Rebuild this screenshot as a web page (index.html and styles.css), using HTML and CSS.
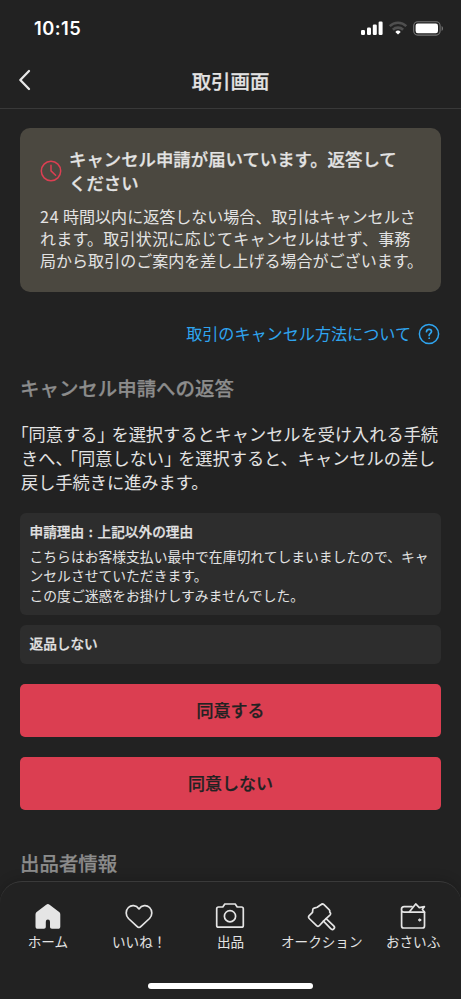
FILE: index.html
```html
<!DOCTYPE html>
<html lang="ja">
<head>
<meta charset="utf-8">
<meta name="viewport" content="width=device-width, initial-scale=1">
<title>取引画面</title>
<link rel="stylesheet" href="styles.css">
</head>
<body>
<div class="screen">
  <div class="status">
    <span class="clock">10:15</span>
    <div class="status-icons">
      <svg width="22" height="14" viewBox="0 0 22 14" fill="#fff"><rect x="0" y="9" width="4" height="5" rx="1.2"/><rect x="6" y="6.5" width="4" height="7.5" rx="1.2"/><rect x="11.8" y="3.5" width="4" height="10.5" rx="1.2"/><rect x="17.6" y="0.5" width="4" height="13.5" rx="1.2"/></svg>
      <svg class="wifi" width="20" height="14" viewBox="0 0 20 14" fill="none" stroke="#4f4f4f" stroke-width="2.6"><path d="M1.7 5.2a11.8 11.8 0 0 1 16.6 0"/><path d="M4.9 8.7a7.3 7.3 0 0 1 10.2 0"/><path d="M10 13.6 7.3 10.9a3.9 3.9 0 0 1 5.4 0z" fill="#fff" stroke="none"/></svg>
      <svg class="battery" width="31" height="15" viewBox="0 0 31 15"><rect x=".7" y=".7" width="26.4" height="13.4" rx="4" fill="none" stroke="#747474" stroke-width="1.1"/><rect x="2.6" y="2.6" width="22.4" height="9.6" rx="2.2" fill="#fff"/><path d="M28.6 5v5c1.9-.7 1.9-4.3 0-5z" fill="#747474"/></svg>
    </div>
  </div>
  <header class="header">
    <svg class="back" width="14" height="22" viewBox="0 0 14 22" fill="none" stroke="#e8e8e8" stroke-width="2.3" stroke-linecap="round" stroke-linejoin="round"><path d="M11 2 2.3 11 11 20"/></svg>
    <h1>取引画面</h1>
  </header>
  <main class="content">
    <section class="alert">
      <div class="alert-head">
        <svg width="22" height="22" viewBox="0 0 22 22" fill="none" stroke="#dc3f52" stroke-width="1.5" stroke-linecap="round" stroke-linejoin="round"><circle cx="11" cy="11" r="9.7"/><path d="M11 5.3v5.6l4.6 4.4"/></svg>
        <h2><span>キャンセル申請が届いています。返答して</span><span>ください</span></h2>
      </div>
      <p><span><i class="digits">24</i>時間以内に返答しない場合、取引はキャンセルさ</span><span class="loose">れます。取引状況に応じてキャンセルはせず、事務</span><span>局から取引のご案内を差し上げる場合がございます。</span></p>
    </section>
    <a class="help"><span>取引のキャンセル方法について</span>
      <svg width="22" height="22" viewBox="0 0 22 22" fill="none" stroke="#2fa5f0" stroke-linecap="round"><circle cx="11" cy="11" r="9.6" stroke-width="1.5"/><path d="M8.5 8.7c.1-1.5 1.1-2.4 2.5-2.4s2.5.9 2.5 2.2c0 1.9-2.4 1.9-2.4 4" stroke-width="1.7"/><circle cx="11.1" cy="15.2" r=".45" fill="#2fa5f0" stroke-width="1"/></svg>
    </a>
    <h3>キャンセル申請への返答</h3>
    <p class="lead"><span class="out"><b class="half">「</b>同意する<b class="half close">」</b>を選択するとキャンセルを受け入れる手続</span><span>きへ<b class="half close">、</b><b class="half">「</b>同意しない<b class="half close">」</b>を選択すると、キャンセルの差し</span><span>戻し手続きに進みます。</span></p>
    <section class="box reason">
      <h4>申請理由<i class="colon">:</i>上記以外の理由</h4>
      <p><span>こちらはお客様支払い最中で在庫切れてしまいましたので、キャ</span><span>ンセルさせていただきます。</span><span>この度ご迷惑をお掛けしすみませんでした。</span></p>
    </section>
    <section class="box return"><h4>返品しない</h4></section>
    <button class="action">同意する</button>
    <button class="action">同意しない</button>
    <h3 class="seller">出品者情報</h3>
  </main>
  <nav class="tabs">
    <div class="tab">
      <svg width="32" height="30" viewBox="0 0 32 30"><path d="M14.2 2.7 5 9.8C4 10.6 3.5 11.5 3.5 12.8v11.7c0 1.5.8 2.3 2.3 2.3h6c1.4 0 2-.7 2-2v-5.1a2.1 2.1 0 0 1 4.2 0v5.1c0 1.3.6 2 2 2h6c1.5 0 2.3-.8 2.3-2.3V12.8c0-1.3-.5-2.2-1.5-3l-9.2-7.1c-1.3-1-2.1-1-3.4 0z" fill="#e5e5e5"/></svg>
      <span>ホーム</span>
    </div>
    <div class="tab">
      <svg width="32" height="30" viewBox="0 0 32 30"><path d="M16 6.9C13.1 2.8 8.3 2.7 5.4 5.5c-3 3-2.9 7.7.1 11l8.2 7.7c1.7 1.7 2.9 1.7 4.6 0l8.2-7.7c3-3.3 3.1-8 .1-11-2.9-2.8-7.7-2.7-10.6 1.4z"/></svg>
      <span>いいね！</span>
    </div>
    <div class="tab">
      <svg width="32" height="30" viewBox="0 0 32 30"><path d="M10.8 2h10.4l2 3h4.3c1.1 0 1.8.7 1.8 1.8v16.6c0 1.1-.7 1.8-1.8 1.8h-23c-1.1 0-1.8-.7-1.8-1.8V6.8C2.7 5.7 3.4 5 4.5 5h4.3z"/><circle cx="16" cy="14.2" r="5.6"/></svg>
      <span>出品</span>
    </div>
    <div class="tab">
      <svg width="32" height="30" viewBox="0 0 32 30"><path d="M14.8 2.8c1-1 2.2-1 3.200-.1l5.300 5.100c.8.8.7 1.500.4 2.300 1.200 1 1.200 2 .2 3l-3.800 3.500-2.600 2.600-4 4.300c-.9 1-1.900 1-2.900.1L3.200 16.500c-.9-.9-.9-1.900 0-2.800l3.300-3.400.3-2.800c.1-.8.6-1.200 1.400-1.400l3-.8z"/><path d="m17.500 19.200 7.200 7.500c1 1 2.100 1.200 3.100.2s.9-2.100-.1-3.100l-7.600-7.200"/></svg>
      <span>オークション</span>
    </div>
    <div class="tab">
      <svg width="32" height="30" viewBox="0 0 32 30"><path d="M15 4.7H7.200a2.700 2.700 0 0 0 0 5.500h20.300V24c0 1.300-.7 2-2 2H6.600c-1.300 0-2-.7-2-2V7.400"/><path d="M12.300 10.100 18.700 1.900l3.600 3.800 5.100-1-2 2.500 2.100 3"/><circle cx="22.700" cy="18" r="1.100" fill="#e5e5e5" stroke-width="1"/></svg>
      <span>おさいふ</span>
    </div>
    <div class="indicator"></div>
  </nav>
</div>
</body>
</html>
```

FILE: styles.css
```css
* { box-sizing: border-box; margin: 0; padding: 0; }
body {
  background: #222;
  color: #e3e3e3;
  font-family: "Noto Sans CJK JP", sans-serif;
  text-spacing-trim: space-all;
}
svg { flex: none; display: block; }
.screen { height: 999px; display: flex; flex-direction: column; overflow: hidden; }
.status {
  height: 56px;
  flex: none;
  display: flex;
  justify-content: space-between;
  padding: 0 17px 0 34px;
}
.clock { font: 600 18.3px/57px Inter, sans-serif; color: #fff; letter-spacing: .45px; }
.status-icons { display: flex; padding-top: 21px; }
.wifi { margin-left: 5px; }
.battery { margin-left: 5px; }
.header {
  height: 53px;
  flex: none;
  display: grid;
  grid-template-columns: 60px 1fr 60px;
  align-items: center;
  border-bottom: 1px solid #393939;
}
.back { margin: -5px 0 0 18px; }
h1 { font-size: 19.4px; line-height: 48px; padding-bottom: 2px; text-align: center; }
h1, h2, h3, h4 { font-weight: 500; -webkit-text-stroke: .25px; }
.content { flex: 1; min-height: 0; padding: 19px 20px 0; overflow: hidden; }
p span, h2 span { display: block; white-space: nowrap; }
i, b { font-style: normal; font-weight: inherit; }
.alert { height: 164px; background: #4b4840; border-radius: 10px; padding: 19px 0 0 20px; }
.alert-head { display: flex; align-items: center; gap: 8px; }
h2 { font-size: 17.4px; line-height: 24px; }
.alert-head h2 { margin-left: -1px; }
.alert p { margin-top: 10px; font-size: 16.05px; line-height: 22.2px; }
.digits { display: inline-block; width: 23px; letter-spacing: .8px; }
.loose { letter-spacing: .2px; }
.help {
  margin-top: 30px;
  height: 23px;
  display: flex;
  align-items: center;
  justify-content: flex-end;
  gap: 7px;
  padding-right: 1px;
  color: #2fa5f0;
  font-size: 16.1px;
}
.help span { padding-bottom: 1px; }
h3 { margin-top: 28px; font-size: 19.45px; line-height: 30px; color: #8c8c8c; }
.lead { margin: 19px 0 0 1px; font-size: 17.2px; line-height: 24px; }
.lead .out { margin-left: -1px; }
.half { font-feature-settings: "halt"; }
.close { margin-right: .32em; }
.box { background: #2d2d2d; border-radius: 6px; padding-left: 9.5px; }
.reason { height: 102px; margin-top: 19px; padding-top: 8px; }
.box h4 { font-size: 13.65px; line-height: 20px; }
.colon { display: inline-block; width: 13.5px; text-align: center; }
.box p { margin-top: 6px; font-size: 13.8px; line-height: 19.3px; }
.return { height: 39px; margin-top: 10px; padding-top: 8px; }
.action {
  display: block;
  width: 100%;
  height: 53px;
  margin-top: 20px;
  padding-bottom: 2px;
  border: 0;
  border-radius: 5px;
  background: #db3e51;
  color: #222;
  font: 500 17px/51px "Noto Sans CJK JP", sans-serif;
  -webkit-text-stroke: .25px;
}
h3.seller { margin-top: 38px; }
.tabs {
  height: 118px;
  flex: none;
  display: grid;
  grid-template-columns: repeat(5, 91.3px);
  grid-template-rows: 101px 6px;
  justify-content: center;
  border-top: 1px solid #3a3a3a;
  border-radius: 22px 22px 0 0;
  box-shadow: 0 -2px 12px rgba(0, 0, 0, .16);
}
.tab { display: flex; flex-direction: column; align-items: center; padding-top: 20px; }
.tab svg { fill: none; stroke: #e5e5e5; stroke-width: 1.7; stroke-linecap: round; stroke-linejoin: round; }
.tab:first-child svg { stroke: none; }
.tab span { margin-top: -1px; font-size: 13.6px; line-height: 20px; white-space: nowrap; }
.indicator { grid-column: 1 / -1; width: 165px; height: 6px; border-radius: 3px; background: #fff; justify-self: center; }
```
